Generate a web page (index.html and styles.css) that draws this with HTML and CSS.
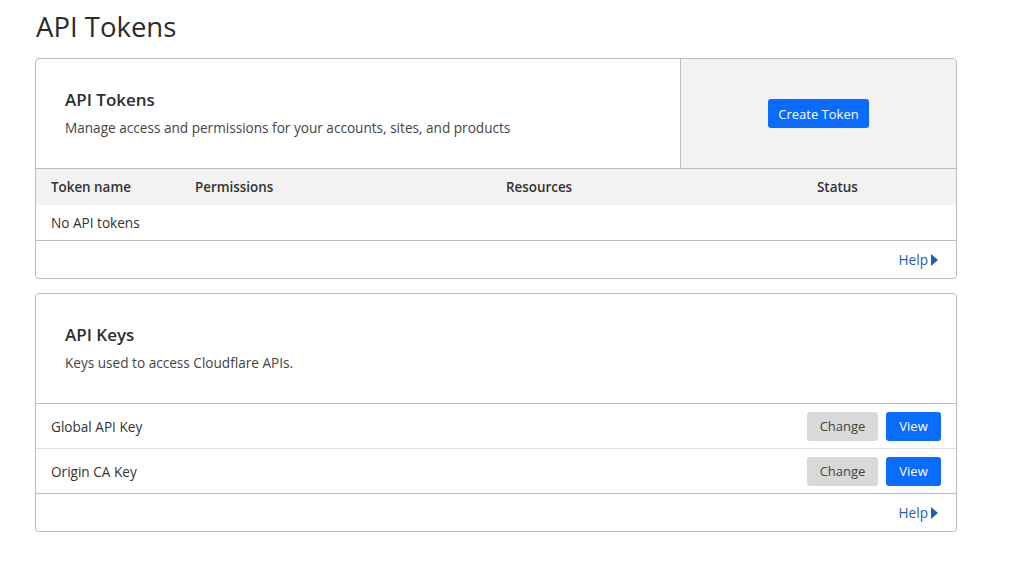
FILE: index.html
```html
<!DOCTYPE html>
<html lang="en">
<head>
<meta charset="utf-8">
<title>API Tokens</title>
<link rel="stylesheet" href="styles.css">
</head>
<body>
<main class="page">
  <h1 class="page-title">API Tokens</h1>

  <section class="card">
    <div class="card-head">
      <div class="card-head-main">
        <h2 class="card-title">API Tokens</h2>
        <p class="card-desc">Manage access and permissions for your accounts, sites, and products</p>
      </div>
      <div class="card-head-side">
        <button class="btn btn-primary btn-create">Create Token</button>
      </div>
    </div>
    <div class="table-head">
      <span>Token name</span>
      <span>Permissions</span>
      <span>Resources</span>
      <span>Status</span>
    </div>
    <div class="table-empty">No API tokens</div>
    <div class="card-foot">
      <a class="help" href="#">Help <svg class="caret" width="7" height="12" viewBox="0 0 7 12"><path d="M0 0 L7 6 L0 12 Z" fill="currentColor"/></svg></a>
    </div>
  </section>

  <section class="card">
    <div class="card-head">
      <div class="card-head-main">
        <h2 class="card-title">API Keys</h2>
        <p class="card-desc">Keys used to access Cloudflare APIs.</p>
      </div>
    </div>
    <div class="key-list">
      <div class="key-row">
        <span class="key-name">Global API Key</span>
        <div class="key-actions">
          <button class="btn btn-secondary">Change</button>
          <button class="btn btn-primary btn-view">View</button>
        </div>
      </div>
      <div class="key-row">
        <span class="key-name">Origin CA Key</span>
        <div class="key-actions">
          <button class="btn btn-secondary">Change</button>
          <button class="btn btn-primary btn-view">View</button>
        </div>
      </div>
    </div>
    <div class="card-foot">
      <a class="help" href="#">Help <svg class="caret" width="7" height="12" viewBox="0 0 7 12"><path d="M0 0 L7 6 L0 12 Z" fill="currentColor"/></svg></a>
    </div>
  </section>
</main>
</body>
</html>
```
FILE: styles.css
```css
* { box-sizing: border-box; }

html, body {
  margin: 0;
  padding: 0;
  background: #ffffff;
}

body {
  font-family: "Open Sans", "Noto Sans", "Liberation Sans", sans-serif;
  font-size: 13.6px;
  color: #333333;
}

.page {
  width: 957px;
  padding: 8px 0 0 35px;
}

.page-title {
  margin: 0 0 13px 1px;
  font-size: 27.5px;
  font-weight: 500;
  line-height: 37px;
  color: #2b2b2b;
}

.card {
  border: 1px solid #bcbcbc;
  border-radius: 4px;
  overflow: hidden;
  margin-bottom: 14px;
  background: #fff;
}

.card-head {
  display: flex;
  height: 110px;
  border-bottom: 1px solid #bcbcbc;
}

.card-head-main {
  flex: 1;
  padding: 29px 0 0 29px;
}

.card-title {
  margin: 0;
  font-size: 17px;
  font-weight: 600;
  line-height: 24px;
  color: #2e2e2e;
}

.card-desc {
  margin: 7px 0 0;
  font-size: 13.6px;
  line-height: 18px;
  color: #444;
}

.card-head-side {
  width: 276px;
  background: #f2f2f2;
  border-left: 1px solid #bcbcbc;
  display: flex;
  align-items: center;
  justify-content: center;
}

.btn {
  font-family: inherit;
  font-size: 13px;
  height: 29px;
  border: none;
  border-radius: 3px;
  padding: 0 14px;
  cursor: pointer;
}

.btn-primary {
  background: #0a6cff;
  color: #ffffff;
}

.btn-secondary {
  background: #d9d9d9;
  color: #444;
  width: 71px;
  padding: 0;
}

.btn-create {
  width: 101px;
  padding: 0;
}

.btn-view {
  width: 55px;
  padding: 0;
}

.table-head {
  display: grid;
  grid-template-columns: 144px 311px 311px 1fr;
  align-items: center;
  height: 36px;
  padding-left: 15px;
  background: #f2f2f2;
  font-weight: 600;
  font-size: 13.4px;
  color: #333;
}

.table-empty {
  height: 36px;
  display: flex;
  align-items: center;
  padding-left: 15px;
  border-bottom: 1px solid #bcbcbc;
  color: #333;
}

.card-foot {
  height: 37px;
  display: flex;
  align-items: center;
  justify-content: flex-end;
  padding-right: 18px;
}

.help {
  color: #1b5fb8;
  text-decoration: none;
  display: inline-flex;
  align-items: center;
  gap: 3px;
}

.caret {
  display: block;
}

.key-list {
  border-bottom: 1px solid #bcbcbc;
}

.key-row {
  display: flex;
  align-items: center;
  justify-content: space-between;
  height: 45px;
  padding: 0 15px;
  border-bottom: 1px solid #dedede;
}

.key-row:last-child {
  height: 44px;
  border-bottom: none;
}

.key-name {
  color: #333;
}

.key-actions {
  display: flex;
  gap: 8px;
}
```
